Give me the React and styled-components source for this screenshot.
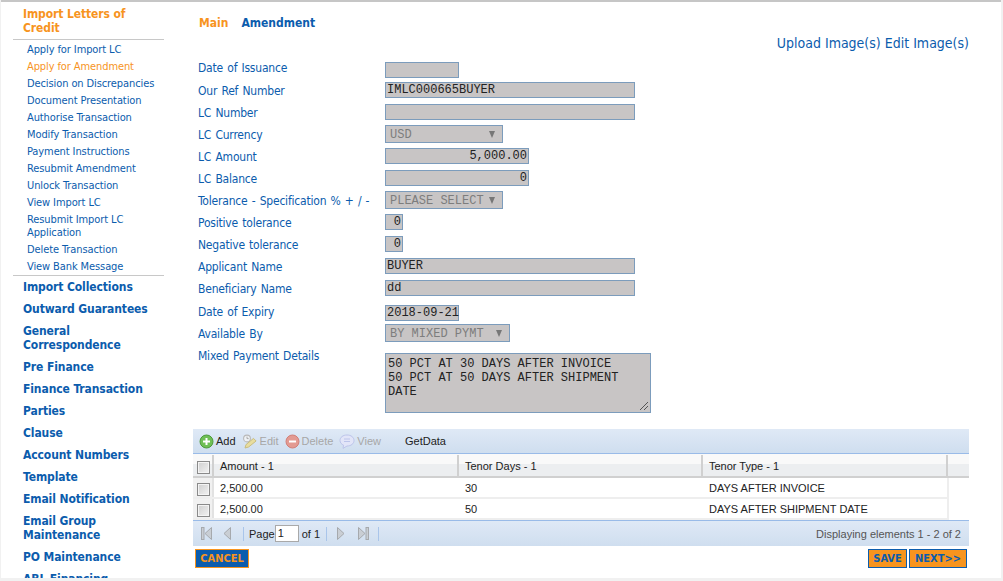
import React from 'react';
import styled, { createGlobalStyle } from 'styled-components';

const font = `"DejaVu Sans Condensed", "DejaVu Sans", "Liberation Sans", sans-serif`;
const gridFont = `"Liberation Sans", Arial, sans-serif`;
const mono = `"Liberation Mono", "Courier New", monospace`;
const blue = '#0b5cad';
const orange = '#f7941e';

const GlobalStyle = createGlobalStyle`
  html, body { margin: 0; padding: 0; height: 100%; overflow: hidden; background: #f1f1f1; }
  * { box-sizing: border-box; }
`;

const Page = styled.div`
  width: 1000px;
  height: 578px;
  margin-left: 1px;
  background: #fff;
  border-top: 2px solid #c6c6c6;
  display: flex;
  overflow: hidden;
  font-family: ${font};
  font-stretch: condensed;
  font-size: 12px;
`;

const Sidebar = styled.nav`
  width: 192px;
  flex: none;
  padding: 5px 29px 0 12px;
`;

const ActiveHead = styled.div`
  color: ${orange};
  font-weight: bold;
  font-size: 12px;
  letter-spacing: -0.1px;
  line-height: 14px;
  padding: 0 20px 4px 10px;
  border-bottom: 1px solid #c8c8c8;
`;

const SubList = styled.div`
  padding: 1px 0 0 14px;
  border-bottom: 1px solid #c8c8c8;
`;

const SubItem = styled.div`
  color: ${p => (p.$active ? orange : blue)};
  font-size: 11px;
  letter-spacing: -0.1px;
  line-height: 13px;
  padding: 2px 0;
`;

const MenuHead = styled.div`
  color: ${blue};
  font-weight: bold;
  font-size: 12px;
  letter-spacing: -0.1px;
  line-height: 14px;
  padding: 4px 0 4px 10px;
`;

const Main = styled.main`
  flex: 1;
  min-width: 0;
  padding-right: 32px;
`;

const Tabs = styled.div`
  display: flex;
  gap: 13px;
  padding: 14px 0 0 6px;
  height: 28px;
  font-weight: bold;
  font-size: 12px;
  line-height: 14px;
`;

const Tab = styled.span`
  color: ${p => (p.$active ? orange : blue)};
`;

const Links = styled.div`
  text-align: right;
  color: ${blue};
  font-size: 14px;
  line-height: 16px;
  padding-top: 5px;
  height: 30px;
`;

const Form = styled.div`
  padding-left: 5px;
`;

const Row = styled.div`
  display: flex;
  align-items: ${p => (p.$top ? 'flex-start' : 'center')};
  height: ${p => p.$h || 22}px;
  margin-top: ${p => p.$mt || 0}px;
`;

const Label = styled.label`
  width: 187px;
  flex: none;
  color: ${blue};
  font-size: 12px;
  letter-spacing: -0.2px;
  word-spacing: 1px;
  line-height: 14px;
  padding-top: ${p => p.$pt ?? 2}px;
  margin-bottom: ${p => p.$lift || 0}px;
`;

const Input = styled.div`
  width: ${p => p.$w}px;
  height: 16px;
  background: #c8c5c5;
  border: 1px solid #7c9cbc;
  font-family: ${mono};
  font-size: 12px;
  line-height: 14px;
  color: #222;
  padding: 0 1px;
  text-align: ${p => (p.$right ? 'right' : 'left')};
  white-space: pre;
`;

const Select = styled.div`
  width: ${p => p.$w}px;
  height: 18px;
  background: #c8c5c5;
  border: 1px solid #7c9cbc;
  font-family: ${mono};
  font-size: 12px;
  line-height: 16px;
  color: #7d7d7d;
  padding: 1px 4px 0;
  display: flex;
  justify-content: space-between;
  align-items: center;
`;

const Caret = styled.span`
  width: 0;
  height: 0;
  margin-right: 3px;
  border-left: 3.5px solid transparent;
  border-right: 3.5px solid transparent;
  border-top: 7px solid #777;
`;

const TextArea = styled.div`
  position: relative;
  width: 266px;
  height: 60px;
  margin-top: 8px;
  background: #c8c5c5;
  border: 1px solid #7c9cbc;
  font-family: ${mono};
  font-size: 12px;
  line-height: 14px;
  color: #222;
  padding: 3px 2px;
  white-space: pre;
`;

const Grip = styled.svg`
  position: absolute;
  right: 1px;
  bottom: 1px;
`;

const Grid = styled.section`
  margin-top: 14px;
  font-family: ${gridFont};
  font-stretch: normal;
  font-size: 11px;
  color: #222;
`;

const Toolbar = styled.div`
  height: 25px;
  display: flex;
  align-items: center;
  padding-left: 6px;
  background: linear-gradient(#dfe9f6, #cfdeef);
  border-bottom: 1px solid #99bbe8;
`;

const ToolButton = styled.span`
  display: inline-flex;
  align-items: center;
  gap: 2px;
  margin-right: ${p => p.$gap ?? 6}px;
  color: ${p => (p.$off ? '#a7a7a7' : '#222')};
`;

const HeaderRow = styled.div`
  height: 24px;
  display: flex;
  padding-top: 1px;
  background: linear-gradient(#f9f9f9 0 45%, #eceef0 45% 100%);
  border-bottom: 2px solid #d0d0d0;
`;

const DataRow = styled.div`
  height: 21px;
  width: 756px;
  display: flex;
  background: #fff;
  border-bottom: 2px solid #eeeeee;
`;

const HeadCell = styled.div`
  width: ${p => p.$w}px;
  flex: none;
  display: flex;
  align-items: center;
  padding-left: ${p => p.$pl ?? 6}px;
  border-right: 2px solid #d0d0d0;
`;

const Cell = styled.div`
  width: ${p => p.$w}px;
  flex: none;
  display: flex;
  align-items: center;
  padding-left: 6px;
  ${p => p.$last && 'border-right: 2px solid #eeeeee;'}
`;

const CheckCell = styled.div`
  width: 21px;
  flex: none;
  display: flex;
  align-items: center;
  padding-left: 4px;
  background: #f1f1f1;
  border-right: 2px solid #e2e2e2;
`;

const Check = styled.span`
  width: 13px;
  height: 13px;
  margin-top: 3px;
  border: 1px solid #8a8a8a;
  background: linear-gradient(135deg, #cfcfcf, #f2f2f2);
  box-shadow: inset 0 0 0 1px #f4f4f4;
`;

const Pager = styled.div`
  height: 26px;
  display: flex;
  align-items: center;
  padding: 0 8px;
  background: linear-gradient(#dfe9f6, #cfdeef);
  border-top: 1px solid #99bbe8;
`;

const PagerIcon = styled.svg`
  margin-right: ${p => p.$gap}px;
  flex: none;
`;

const Sep = styled.span`
  width: 1px;
  height: 14px;
  background: #a9c5ea;
  margin-right: ${p => p.$r}px;
`;

const PageBox = styled.span`
  width: 24px;
  height: 17px;
  margin: 0 3px 0 0;
  background: #fff;
  border: 1px solid #a9a9a9;
  padding-left: 2px;
  line-height: 15px;
`;

const OfTotal = styled.span`
  margin-right: 6px;
`;

const Status = styled.span`
  margin-left: auto;
  color: #555;
`;

const Actions = styled.div`
  display: flex;
  padding: 3px 2px 0 2px;
  gap: 2px;
`;

const Btn = styled.button`
  height: 19px;
  width: ${p => p.$w}px;
  padding: 0;
  font-family: ${font};
  font-stretch: condensed;
  font-size: 11px;
  font-weight: bold;
  line-height: 15px;
  color: ${p => (p.$primary ? orange : blue)};
  background: ${p => (p.$primary ? blue : orange)};
  border: 1px solid ${p => (p.$primary ? orange : blue)};
  ${p => p.$push && 'margin-left: auto;'}
`;

const sub = [
  'Apply for Import LC', 'Apply for Amendment', 'Decision on Discrepancies', 'Document Presentation',
  'Authorise Transaction', 'Modify Transaction', 'Payment Instructions', 'Resubmit Amendment',
  'Unlock Transaction', 'View Import LC', 'Resubmit Import LC Application', 'Delete Transaction', 'View Bank Message',
];

const heads = [
  'Import Collections', 'Outward Guarantees', 'General Correspondence', 'Pre Finance', 'Finance Transaction',
  'Parties', 'Clause', 'Account Numbers', 'Template', 'Email Notification', 'Email Group Maintenance',
  'PO Maintenance', 'ABL Financing',
];

const AddIcon = () => (
  <svg width="15" height="15" viewBox="0 0 15 15">
    <circle cx="7.5" cy="7.5" r="6.5" fill="#6fbf55" stroke="#4c9a3b" />
    <path d="M7.5 4v7M4 7.5h7" stroke="#fff" strokeWidth="2" />
  </svg>
);

const EditIcon = () => (
  <svg width="16" height="15" viewBox="0 0 16 15">
    <circle cx="5" cy="4.5" r="3.4" fill="#eef1f4" stroke="#b8b8b8" strokeWidth="1.1" />
    <path d="M5 2.6v2h1.6" stroke="#a8a8a8" fill="none" />
    <path d="M3 14l1-3.4 7.5-6.2 2.6 2.6-7.5 6z" fill="#e8dd9e" stroke="#c9bd80" />
  </svg>
);

const DeleteIcon = () => (
  <svg width="15" height="15" viewBox="0 0 15 15">
    <circle cx="7.5" cy="7.5" r="6.5" fill="#e39a92" stroke="#d27f77" />
    <path d="M4 7.5h7" stroke="#fff" strokeWidth="2" />
  </svg>
);

const ViewIcon = () => (
  <svg width="16" height="15" viewBox="0 0 16 15">
    <path d="M8 1c4 0 7 2.3 7 5.5S12 12 8 12l-4 2.4.6-3.2C2.400 10.300 1 8.600 1 6.500 1 3.300 4 1 8 1z" fill="#e2e5f8" stroke="#bcc4ea" />
    <path d="M5 5h6M5 7.500h6" stroke="#bcc4ea" />
  </svg>
);

// bar + triangle when bar is set, triangle alone otherwise
const PagerGlyph = ({ flip, bar, gap }) => {
  const w = bar ? 11 : 8;
  return (
    <PagerIcon width={w} height="13" viewBox={`0 0 ${w} 13`} $gap={gap}>
      <g transform={flip ? `translate(${w} 0) scale(-1 1)` : undefined} fill="#c9ced4" stroke="#a6a9ad">
        {bar && <rect x="0.5" y="0.5" width="2.500" height="12" />}
        <path d={`M${w - 0.5} 0.500v12L${w - 7} 6.500z`} />
      </g>
    </PagerIcon>
  );
};

const App = () => (
  <Page>
    <GlobalStyle />
    <Sidebar>
      <ActiveHead>Import Letters of Credit</ActiveHead>
      <SubList>
        {sub.map(s => (
          <SubItem key={s} $active={s === 'Apply for Amendment'}>{s}</SubItem>
        ))}
      </SubList>
      {heads.map(h => (
        <MenuHead key={h}>{h}</MenuHead>
      ))}
    </Sidebar>
    <Main>
      <Tabs>
        <Tab $active>Main</Tab>
        <Tab>Amendment</Tab>
      </Tabs>
      <Links>Upload Image(s) Edit Image(s)</Links>
      <Form>
        <Row $h={20}><Label $lift={6}>Date of Issuance</Label><Input $w={74} /></Row>
        <Row $h={20}><Label>Our Ref Number</Label><Input $w={250}>IMLC000665BUYER</Input></Row>
        <Row $mt={1}><Label>LC Number</Label><Input $w={250} /></Row>
        <Row><Label>LC Currency</Label><Select $w={118}>USD<Caret /></Select></Row>
        <Row><Label>LC Amount</Label><Input $w={144} $right>5,000.00</Input></Row>
        <Row><Label>LC Balance</Label><Input $w={144} $right>0</Input></Row>
        <Row><Label>Tolerance - Specification % + / -</Label><Select $w={118}>PLEASE SELECT<Caret /></Select></Row>
        <Row><Label>Positive tolerance</Label><Input $w={18} $right>0</Input></Row>
        <Row><Label>Negative tolerance</Label><Input $w={18} $right>0</Input></Row>
        <Row><Label>Applicant Name</Label><Input $w={250}>BUYER</Input></Row>
        <Row><Label>Beneficiary Name</Label><Input $w={250}>dd</Input></Row>
        <Row $h={20} $mt={4}><Label $lift={4}>Date of Expiry</Label><Input $w={74}>2018-09-21</Input></Row>
        <Row $h={20}><Label>Available By</Label><Select $w={125}>BY MIXED PYMT<Caret /></Select></Row>
        <Row $h={70} $mt={2} $top>
          <Label $pt={4}>Mixed Payment Details</Label>
          <TextArea>
            {'50 PCT AT 30 DAYS AFTER INVOICE\n50 PCT AT 50 DAYS AFTER SHIPMENT\nDATE'}
            <Grip width="10" height="10" viewBox="0 0 10 10">
              <path d="M1 9l8-8M5 9l4-4" stroke="#555" />
            </Grip>
          </TextArea>
        </Row>
      </Form>
      <Grid>
        <Toolbar>
          <ToolButton><AddIcon />Add</ToolButton>
          <ToolButton $off><EditIcon />Edit</ToolButton>
          <ToolButton $off><DeleteIcon />Delete</ToolButton>
          <ToolButton $off $gap={24}><ViewIcon />View</ToolButton>
          <ToolButton>GetData</ToolButton>
        </Toolbar>
        <HeaderRow>
          <HeadCell $w={21} $pl={4}><Check /></HeadCell>
          <HeadCell $w={245}>Amount - 1</HeadCell>
          <HeadCell $w={244}>Tenor Days - 1</HeadCell>
          <HeadCell $w={245}>Tenor Type - 1</HeadCell>
        </HeaderRow>
        {[['30', 'DAYS AFTER INVOICE'], ['50', 'DAYS AFTER SHIPMENT DATE']].map(([d, t]) => (
          <DataRow key={d}>
            <CheckCell><Check /></CheckCell>
            <Cell $w={245}>2,500.00</Cell>
            <Cell $w={244}>{d}</Cell>
            <Cell $w={246} $last>{t}</Cell>
          </DataRow>
        ))}
        <Pager>
          <PagerGlyph bar gap={11} />
          <PagerGlyph gap={12} />
          <Sep $r={5} />
          <span>Page</span>
          <PageBox>1</PageBox>
          <OfTotal>of 1</OfTotal>
          <Sep $r={10} />
          <PagerGlyph flip gap={13} />
          <PagerGlyph flip bar gap={9} />
          <Sep $r={0} />
          <Status>Displaying elements 1 - 2 of 2</Status>
        </Pager>
      </Grid>
      <Actions>
        <Btn $primary $w={54}>CANCEL</Btn>
        <Btn $push $w={39}>SAVE</Btn>
        <Btn $w={58}>NEXT&gt;&gt;</Btn>
      </Actions>
    </Main>
  </Page>
);

export default App;
